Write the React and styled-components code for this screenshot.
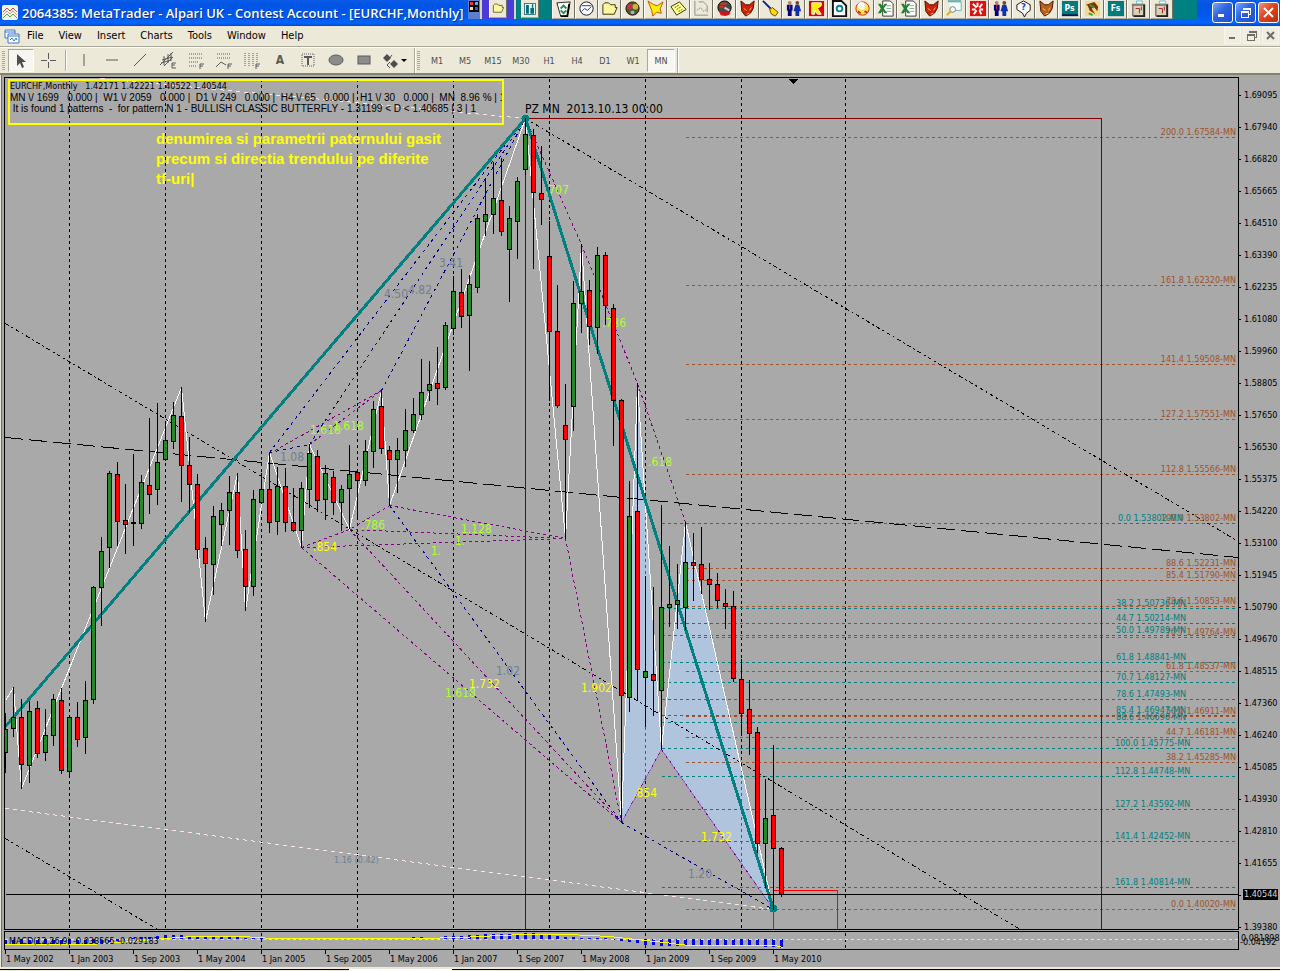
import React from 'react';
import styled, {createGlobalStyle} from 'styled-components'

const UI_FONT = '"DejaVu Sans Condensed", Tahoma, "Noto Sans", sans-serif';

const GlobalStyle = createGlobalStyle`
	body {
		background-color: #ffffff;
		margin: 0;
		padding: 0;
	}

	* {
		box-sizing: border-box;
		font-family: ${UI_FONT};
	}
`;
const Window = styled.div`
	margin-right: 19px;
	background: #ece9d8;
	overflow: hidden;
`;
const TitleBar = styled.header`
	display: flex;
	align-items: flex-start;
	height: 26px;
	background: linear-gradient(#0a5ce8, #0054e3 20%, #0058ee 60%, #0066ff 88%, #0047cc);
	.logo {
		margin: 5px 4px 0 2px;
		flex: none;
	}
`;
const Title = styled.h1`
	flex: none;
	width: 446px;
	margin: 0;
	overflow: hidden;
	white-space: nowrap;
	color: #ffffff;
	font-size: 13px;
	font-weight: 600;
	line-height: 26px;
	font-family: "Open Sans", "Noto Sans", sans-serif;
	text-shadow: 1px 1px 0 #0a2f8c;
`;
const Launcher = styled.nav`
	display: flex;
	flex: none;
	height: 19px;
`;
const Well = styled.div`
	display: flex;
	justify-content: ${props => props.$align || 'center'};
	width: ${props => props.$width};
	padding-left: ${props => props.$pad || '0'};
	background: ${props => props.$color};
	border-right: ${props => props.$edge ? '2px solid #d8d4c8' : 'none'};
`;
const LaunchButton = styled.button`
	display: flex;
	align-items: center;
	justify-content: center;
	width: ${props => props.$small ? '18px' : '23px'};
	height: ${props => props.$small ? '18px' : '19px'};
	padding: 0;
	border: 0;
	border-right: 1px solid #716f64;
	border-left: 1px solid #ffffff;
	border-bottom: 1px solid #aca899;
	background: #ece9d8;
`;
const WindowButtons = styled.div`
	display: flex;
	gap: 2px;
	margin: 2px 1px 0 auto;
`;
const WindowButton = styled.button`
	display: flex;
	align-items: center;
	justify-content: center;
	width: 21px;
	height: 21px;
	padding: 0;
	border: 1px solid #ffffff;
	border-radius: 3px;
	background: ${props => props.$close ? 'linear-gradient(135deg, #f0967a, #e0451c 45%, #b82c08)' : 'linear-gradient(135deg, #7ea6f5, #2c63e0 45%, #1c4fd0)'};
`;
const MenuBar = styled.nav`
	display: flex;
	align-items: center;
	height: 22px;
	padding: 0 1px 2px 4px;
	border-bottom: 1px solid #ffffff;
	box-shadow: inset 0 -1px 0 #aca899;
`;
const MenuItem = styled.button`
	padding: 0 8px 0 7px;
	border: 0;
	background: none;
	color: #000000;
	font-size: 11px;
	line-height: 18px;
`;
const ChildButtons = styled.div`
	display: flex;
	gap: 2px;
	margin-left: auto;
`;
const ChildButton = styled.button`
	display: flex;
	align-items: center;
	justify-content: center;
	width: 17px;
	height: 17px;
	padding: 0;
	border: 1px solid #f6f5ee;
	background: #f0eee2;
`;
const ToolBar = styled.div`
	display: flex;
	align-items: center;
	height: 27px;
	padding-left: 2px;
	border-bottom: 2px solid #85826f;
`;
const Grip = styled.span`
	width: 3px;
	height: 20px;
	margin-right: 3px;
	background: repeating-linear-gradient(#aca899 0 1px, #ece9d8 1px 2px);
`;
const Separator = styled.span`
	width: 2px;
	height: ${props => props.$tall ? '25px' : '21px'};
	margin: ${props => props.$tall ? '0 1px 0 2px' : '0 3px'};
	background: #aca899;
	border-right: 1px solid #ffffff;
`;
const ToolButton = styled.button`
	display: flex;
	align-items: center;
	justify-content: center;
	width: ${props => props.$width || '28px'};
	height: 23px;
	padding: 0;
	border: 1px solid;
	border-color: ${props => props.$pressed ? '#aca899 #ffffff #ffffff #aca899' : 'transparent'};
	background: ${props => props.$pressed ? '#f7f6f0' : 'none'};
	color: #4d4d4d;
	font-size: 9px;
`;
const ChartWindow = styled.main`
	display: grid;
	grid-template-columns: minmax(0, 1fr) 41px;
	row-gap: 1px;
	margin-left: 1px;
	padding: 2px 0 0 2px;
	border-left: 1px solid #716f64;
	background: #a9a9a9;
`;
const Panel = styled.section`
	position: relative;
	border: 1px solid #000000;
	svg {
		display: block;
		width: 100%;
	}
`;
const Caption = styled.div`
	position: absolute;
	top: 1px;
	left: 3px;
	width: 496px;
	height: 46px;
	border: 2px solid #ffff00;
	overflow: hidden;
	white-space: pre;
	font-size: 9px;
	line-height: 11px;
	p {
		margin: 0;
	}
`;
const CaptionLine = styled.p`
	font: 10px/11px "Liberation Sans", Arial, sans-serif;
`;
const Note = styled.p`
	position: absolute;
	top: 51px;
	left: 151px;
	width: 320px;
	margin: 0;
	color: #ffff00;
	font: bold 15px/20px "Liberation Sans", Arial, sans-serif;
`;
const PriceAxis = styled.ol`
	height: 0;
	min-height: 100%;
	margin: 0;
	padding: 2px 0 0;
	list-style: none;
	font-size: 9px;
	line-height: 32px;
	li {
		display: flex;
		align-items: center;
		gap: 3px;
		height: 32px;
	}
	li::before {
		content: "";
		width: 2px;
		height: 1px;
		background: #000000;
	}
`;
const CurrentPrice = styled.b`
	flex: 1;
	margin: 0 2px 2px -1px;
	padding-left: 1px;
	background: #000000;
	color: #d8d8d8;
	font-weight: normal;
	line-height: 11px;
`;
const MacdAxis = styled.div`
	position: relative;
	padding: 3px 0 0 2px;
	font-size: 9px;
	line-height: 9px;
	span + span {
		position: absolute;
		top: 7px;
		left: 1px;
	}
`;
const MacdLabel = styled.span`
	position: absolute;
	top: 4px;
	left: 4px;
	font-size: 9px;
	line-height: 11px;
`;
const TimeAxis = styled.ol`
	display: flex;
	grid-column: 1 / -1;
	height: 17px;
	margin: -1px 0 0;
	padding: 0 0 0 1px;
	list-style: none;
	font-size: 9px;
	line-height: 11px;
	white-space: nowrap;
	li {
		width: 64px;
		height: 3px;
		border-left: 1px solid #000000;
		padding: 4px 0 0;
	}
`;
const StatusEdge = styled.footer`
	display: flex;
	height: 4px;
	padding-top: 2px;
	span {
		flex: 349;
		height: 2px;
		border-top: 1px solid #000000;
	}
	span:nth-child(2) {
		flex: 103;
		border-color: #ffffff;
		background: #ffffff;
	}
	span:nth-child(3) {
		flex: 828;
	}
`;

const months = ['May 2002', 'Jan 2003', 'Sep 2003', 'May 2004', 'Jan 2005', 'Sep 2005', 'May 2006', 'Jan 2007', 'Sep 2007', 'May 2008', 'Jan 2009', 'Sep 2009', 'May 2010'];

const prices = ['1.69095', '1.67940', '1.66820', '1.65665', '1.64510', '1.63390', '1.62235', '1.61080', '1.59960', '1.58805', '1.57650', '1.56530', '1.55375', '1.54220', '1.53100', '1.51945', '1.50790', '1.49670', '1.48515', '1.47360', '1.46240', '1.45085', '1.43930', '1.42810', '1.41655', '1.40544', '1.39380'];

// high, body top, body bottom, low, 1 = up month
const candles = [
	[713, 729, 752, 772, 1], [687, 717, 728, 736, 1], [699, 717, 764, 788, 0], [701, 711, 765, 782, 1],
	[701, 708, 753, 757, 0], [709, 735, 752, 760, 1], [694, 699, 735, 745, 1], [688, 700, 770, 773, 0],
	[715, 717, 771, 776, 1], [702, 717, 739, 746, 0], [681, 700, 737, 753, 1], [586, 587, 699, 703, 1],
	[537, 551, 587, 625, 1], [471, 473, 547, 567, 1], [462, 474, 521, 545, 0], [484, 520, 524, 553, 0],
	[454, 522, 523, 545, 1], [475, 482, 523, 528, 1], [418, 485, 494, 513, 0], [403, 462, 489, 504, 1],
	[424, 440, 459, 460, 1], [402, 415, 441, 448, 1], [387, 416, 465, 501, 0], [437, 465, 484, 512, 0],
	[474, 484, 549, 558, 0], [537, 548, 563, 621, 0], [506, 516, 564, 594, 1], [503, 510, 524, 545, 1],
	[476, 492, 510, 544, 1], [473, 492, 550, 557, 0], [530, 549, 586, 610, 0], [490, 499, 586, 595, 1],
	[473, 489, 502, 503, 1], [452, 489, 522, 532, 0], [467, 486, 521, 534, 1], [468, 486, 522, 531, 0],
	[488, 522, 530, 531, 0], [482, 488, 530, 547, 1], [444, 453, 489, 507, 1], [450, 456, 500, 511, 0],
	[465, 473, 499, 519, 1], [471, 477, 502, 514, 0], [485, 489, 502, 530, 1], [445, 474, 488, 528, 1],
	[470, 472, 480, 518, 0], [440, 451, 480, 485, 1], [401, 409, 451, 467, 1], [390, 406, 448, 453, 0],
	[446, 450, 459, 505, 0], [438, 450, 459, 492, 1], [409, 430, 450, 466, 1], [398, 414, 430, 432, 1],
	[359, 392, 414, 419, 1], [361, 384, 390, 400, 1], [347, 383, 388, 404, 0], [322, 325, 387, 389, 1],
	[276, 291, 328, 334, 1], [269, 292, 316, 327, 0], [275, 284, 315, 370, 1], [214, 218, 287, 292, 1],
	[178, 214, 221, 235, 1], [162, 198, 214, 233, 1], [158, 200, 231, 235, 0], [206, 218, 249, 301, 1],
	[177, 181, 221, 258, 1], [118, 134, 169, 174, 1], [129, 135, 192, 268, 0], [146, 193, 199, 224, 0],
	[221, 256, 331, 400, 0], [285, 331, 405, 407, 0], [384, 425, 439, 538, 0], [281, 303, 406, 430, 1],
	[244, 291, 303, 332, 1], [280, 290, 326, 344, 0], [247, 255, 327, 353, 1], [252, 255, 305, 324, 0],
	[304, 308, 400, 445, 0], [399, 400, 695, 822, 0], [481, 516, 697, 711, 1], [383, 511, 669, 699, 0],
	[576, 671, 677, 726, 1], [587, 674, 680, 715, 0], [505, 607, 690, 749, 1], [546, 604, 607, 626, 1],
	[564, 600, 604, 628, 1], [522, 562, 607, 629, 1], [533, 562, 565, 600, 0], [527, 564, 579, 593, 0],
	[563, 579, 584, 609, 0], [573, 584, 600, 607, 0], [589, 603, 606, 628, 0], [591, 606, 678, 681, 0],
	[659, 679, 713, 734, 0], [680, 709, 733, 754, 0], [727, 732, 843, 852, 0], [779, 818, 843, 887, 1],
	[745, 815, 848, 909, 0], [847, 848, 894, 896, 0],
];

const macd = [
	-6, -6, -6, -6, -6, -6, -6, -6, -6, -6, -5, -4, -4, -3, -2, -1, 1, 2, 2, 3, 4, 4, 4, 3,
	2, 2, 2, 2, 2, 2, 1, 1, 1, 1, 1, 0, 0, 0, 0, 0, 0, 0, 0, 0, 1, 1, 1, 1,
	1, 1, 1, 2, 2, 1, 1, 3, 3, 3, 4, 4, 5, 5, 5, 5, 5, 6, 6, 4, 4, 3, 2, 2,
	1, 1, 1, 1, -1, -2, -3, -4, -6, -6, -7, -7, -7, -6, -6, -6, -6, -6, -6, -6, -6, -6, -7, -8,
	-8, -9,
];

const sienna = [
	[137, '200.0 1.67584'], [285, '161.8 1.62320'], [364, '141.4 1.59508'], [419, '127.2 1.57551'],
	[474, '112.8 1.55566'], [523, '100.0 1.53802'], [568, '88.6 1.52231'], [580, '85.4 1.51790'],
	[606, '78.6 1.50853'], [637, '70.7 1.49764'], [671, '61.8 1.48537'], [716, '50.0 1.46911'],
	[737, '44.7 1.46181'], [762, '38.2 1.45285'], [909, '0.0 1.40020'],
];

const teal = [
	[523, 1118, '0.0 1.53802'], [608, 1116, '38.2 1.50736'], [623, 1116, '44.7 1.50214'], [635, 1116, '50.0 1.49789'],
	[662, 1116, '61.8 1.48841'], [682, 1116, '70.7 1.48127'], [699, 1116, '78.6 1.47493'], [715, 1116, '85.4 1.46947'],
	[722, 1116, '88.6 1.46690'], [748, 1115, '100.0 1.45775'], [776, 1115, '112.8 1.44748'], [809, 1115, '127.2 1.43592'],
	[841, 1115, '141.4 1.42452'], [887, 1115, '161.8 1.40814'],
];

const purpleLines = [
	'269,453 381,390', '309,444 381,390', '301,547 349,529 389,505', '389,505 565,538', '349,529 565,538',
	'301,547 565,538', '301,547 621,822', '349,529 621,822', '565,538 621,822', '525,118 581,244 637,383 685,522',
];
const navyLines = [
	'269,452 525,118', '309,444 525,118', '381,390 525,118', '269,452 309,444', '389,505 621,822', '621,822 773,909',
];
const trendLines = ['525,118 1238,541', '5,323 1020,929', '5,838 157,929'];

const LIME = '#adff2f';
const SLATE = '#708090';
const YELLOW = '#ffff00';
const ratios = [
	[545, 194, '.707', LIME], [602, 327, '.786', LIME], [648, 466, '.618', LIME], [310, 434, '1.618', LIME],
	[333, 430, '1.618', LIME], [361, 529, '.786', LIME], [461, 533, '1.128', LIME], [431, 555, '1.', LIME],
	[455, 545, '1.', LIME], [445, 697, '1.618', LIME], [439, 267, '3.41', SLATE], [408, 294, '4.82', SLATE],
	[384, 298, '4.50', SLATE], [280, 461, '1.08', SLATE], [496, 675, '1.02', SLATE], [688, 878, '1.20', SLATE],
	[313, 551, '.854', YELLOW], [469, 688, '1.732', YELLOW], [581, 692, '1.902', YELLOW], [633, 797, '.854', YELLOW],
	[701, 841, '1.732', YELLOW],
];

const grid = [69, 165, 261, 357, 453, 549, 845];

const PriceChart = () => (
	<svg height="851" role="img" aria-label="EURCHF monthly candles">
		<g transform="translate(-4.5 -77.5)" fill="none" shapeRendering="crispEdges">
			<g fill="#b0c4de">
				<path d="M621 822 637 383 661 749Z" />
				<path d="M661 749 685 522 773 909Z" />
			</g>
			<g stroke="#000000" strokeDasharray="3 3">
				{grid.map(x => <path key={x} d={`M${x} 78V929`} />)}
				<path d="M645 78V498M645 780V929M741 78V768M741 864V929" />
			</g>
			<path d="M645 498V780M741 768V864" stroke="#008080" strokeDasharray="3 3" />
			<g stroke="#a0522d" strokeDasharray="3 3">
				{sienna.map(([y]) => <path key={y} d={`M685 ${y}H1235`} />)}
			</g>
			<g stroke="#008080" strokeDasharray="3 3">
				{teal.map(([y]) => <path key={y} d={`M661 ${y}H1235`} />)}
			</g>
			<path d="M5 437 1238 557" stroke="#000000" strokeDasharray="18 6" />
			<g stroke="#000000" strokeDasharray="4 3 2 3">
				{trendLines.map(p => <polyline key={p} points={p} />)}
			</g>
			<path d="M5 808 773 909M100 78 525 118" stroke="#ffe4e1" strokeDasharray="4 4" />
			<path d="M525 929V118H1101V929" stroke="#800000" />
			<path d="M773 929V890H837V929" stroke="#ff0000" />
			<g stroke="#800080" strokeDasharray="3 3">
				{purpleLines.map(p => <polyline key={p} points={p} />)}
			</g>
			<g stroke="#00008b" strokeDasharray="3 4">
				{navyLines.map(p => <polyline key={p} points={p} />)}
			</g>
			<path d="M621 822 661 749 773 909" stroke="#9370db" />
			<path d="M621 822 661 749 773 909" stroke="#800080" strokeDasharray="2 5" />
			<path d="M5 700 13 687 21 788 181 387 205 621 237 473 245 610 269 452 301 547 309 444 349 529 381 390 389 505 525 118 565 538 581 244 621 822 637 383 661 749 685 522 773 909" stroke="#ffffff" />
			<path d="M5 726 525 118 773 909" stroke="#008080" strokeWidth="3" />
			<g fill="#008080">
				<circle cx="525" cy="118" r="4" />
				<circle cx="773" cy="908" r="4" />
			</g>
			<path d="M5 894H1238" stroke="#000000" />
			<path d="M787 78h11l-5 5h-1z" fill="#000000" />
		</g>
		<g transform="translate(-5 -78)">
			<g fontSize="9" fill="#a0522d" textAnchor="end">
				{sienna.map(([y, text]) => <text key={y} x="1236" y={y - 2}>{text}-MN</text>)}
			</g>
			<g fontSize="9" fill="#008080">
				{teal.map(([y, x, text]) => <text key={y} x={x} y={y - 2}>{text}-MN</text>)}
			</g>
			<g fontSize="12">
				{ratios.map(([x, y, text, color]) => <text key={x} x={x} y={y} fill={color}>{text}</text>)}
				<text x="525" y="113" xmlSpace="preserve">PZ MN  2013.10.13 00:00</text>
			</g>
			<text x="334" y="863" fontSize="9" fill={SLATE}>1.16 (0.42)</text>
			{candles.map(([high, top, bottom, low, up], i) => {
				const x = 5 + i * 8;
				return (
					<g key={x} shapeRendering="crispEdges">
						<rect x={x} y={high} width="1" height={low - high + 1} />
						<rect x={x - 2} y={top} width="5" height={bottom - top + 1} />
						<rect x={x - 1} y={top + 1} width="3" height={Math.max(bottom - top - 1, 0)} fill={up ? '#228b22' : '#ff0000'} />
					</g>
				);
			})}
		</g>
	</svg>
);

const MacdChart = () => (
	<svg height="17" role="img" aria-label="MACD">
		<g transform="translate(-5 -932)" shapeRendering="crispEdges">
			{macd.map((v, i) => (
				<rect key={i} x={4 + i * 8} y={v > 0 ? 939 - v : 939} width="3" height={Math.abs(v)} fill="#0000ff" />
			))}
			<g fill="none" transform="translate(0 .5)">
				<path d="M845 932V949M69 932V949M261 932V949M453 932V949M645 932V949" stroke="#000000" strokeDasharray="3 3" />
				<path d="M5 939H1238" stroke="#ffff00" strokeDasharray="3 3" />
				<path d="M5 944H90L120 942 165 938 193 936H242L272 938H420L460 937 500 935 525 934H568L610 936 645 940 665 942 680 944 690 945H775L783 947" stroke="#ffff00" />
			</g>
		</g>
	</svg>
);

const Fox = ({color = '#d02010'}) => (
	<>
		<path d="M2 1l5 4h4l5-4-1 8-3 5-5 3-4-5z" fill={color} stroke="#4a1000" />
		<path d="M5 9l3 2m5-3-2 3m-3 4 3-1" stroke="#ffcc33" fill="none" />
	</>
);
const People = () => (
	<>
		<circle cx="5" cy="3" r="2" fill="#c08060" />
		<path d="M2 5h6v6H7v6H3v-6H2z" fill="#000080" />
		<circle cx="13" cy="3" r="2" fill="#804020" />
		<path d="M11 5h4l2 7h-2v5h-4v-5H9z" fill="#1030b0" />
		<path d="M5 5v5" stroke="#ff3030" />
	</>
);
const Excel = () => (
	<>
		<path d="M6 1h8l3 3v13H6z" fill="#ffffff" stroke="#333333" />
		<path d="M10 6h5M10 9h5M10 12h5" stroke="#80b080" />
		<path d="M1 4h3l2 3 2-3h3l-4 5 4 5H8l-2-3-2 3H1l3-5z" fill="#208030" />
	</>
);
const Bin = () => (
	<>
		<path d="M3 5h12v12H3z" fill="#d8d0b8" stroke="#444444" />
		<path d="M2 4h14v2H2z" fill="#80786a" />
		<path d="M7 1h6v3H7z" fill="#ffffff" stroke="#5fc0d0" />
		<path d="M6 9h4v5M12 7v4" stroke="#b02020" fill="none" />
		<path d="M15 5v12H4" stroke="#222222" strokeWidth="2" fill="none" />
	</>
);
const Folder = () => <path d="M2 15V5l2-2h4l2 2h5v3h2l-3 7z" fill="#fff7a0" stroke="#333300" />;
const Tile = ({text, ring}) => (
	<>
		<rect x="1" y="1" width="17" height="16" fill="#007c80" />
		<path d="M1 15h17v2H1z" fill={ring || '#007c80'} />
		<text x="9" y="12" fontSize="9" fontWeight="bold" textAnchor="middle" fill="#ffffff">{text}</text>
	</>
);

const launchers = [
	['Recycle Bin', <><path d="M2 3l14-1-3 15H6z" fill="#ffffff" stroke="#222222" /><path d="M6 9l3-3 3 3M12 11l-3 3-3-3" stroke="#209040" strokeWidth="2" fill="none" /><path d="M15 4l-2 13H6" stroke="#000000" strokeWidth="2" fill="none" /></>],
	['Charts', <><circle cx="9" cy="9" r="7" fill="#ffffff" stroke="#111133" /><path d="M4 6h10M4 12l3-3 3 2 4-4" stroke="#1030a0" fill="none" /></>],
	['Documents', <Folder />],
	['Player', <><circle cx="9" cy="9" r="7" fill="#406020" stroke="#301010" /><circle cx="6" cy="7" r="3" fill="#c03050" /><circle cx="12" cy="7" r="3" fill="#d0b040" /><circle cx="9" cy="13" r="2" fill="#c0a0d0" /></>],
	['Star', <path d="M1 1l6 4 4 1 6-4-3 7 1 5-5-1-4 4-1-6z" fill="#ffee00" stroke="#c05000" />],
	['Notes', <><path d="M1 7l9-5 7 8-10 6z" fill="#ffff90" stroke="#333300" /><path d="M5 8l5-3M7 10l5-3M9 12l4-2" stroke="#555500" strokeDasharray="2 1" /></>],
	['Sketch', <><path d="M2 1v15h14M6 2h5l4 4v7" stroke="#8c8c84" fill="none" /><path d="M4 11l4-3 3 4 3-2" stroke="#50a0b0" strokeDasharray="2 1" fill="none" /></>],
	['Helmet', <><circle cx="9" cy="8" r="7" fill="#504848" stroke="#000000" /><path d="M3 11l3 2h9v2l-5 2-5-1z" fill="#e01010" /><path d="M5 4h6M4 7h4" stroke="#e03020" strokeWidth="2" /><path d="M9 8l5 3" stroke="#d0d0d0" strokeWidth="2" /></>],
	['Fox', <Fox />],
	['Screwdriver', <><path d="M1 1l8 8" stroke="#1020a0" strokeWidth="2" /><path d="M8 10l3-2 6 5-3 4-4-2z" fill="#ffdd00" stroke="#704000" /></>],
	['Accounts', <People />],
	['Karaoke', <><rect x="1" y="1" width="16" height="16" fill="#e00000" /><path d="M4 3h10v3l-4 3 4 6h-4L7 11v4H4z" fill="#ffee00" stroke="#ffffff" /></>],
	['Viewer', <><path d="M2 1h9l5 5v11H2z" fill="#ffffff" stroke="#111111" strokeWidth="2" /><circle cx="9" cy="9" r="3" fill="none" stroke="#008090" strokeWidth="2" /></>],
	['Ball', <><circle cx="9" cy="9" r="7" fill="#ffe840" stroke="#d02020" /><circle cx="8" cy="6" r="4" fill="#ffffff" /><path d="M4 12l3 2m4-2 3 1" stroke="#e02020" strokeWidth="2" /></>],
	['Workbook', <Excel />],
	['Workbook copy', <Excel />],
	['Fox two', <Fox />],
	['Search', <><path d="M2 2h14v9H7" fill="#f4ffff" stroke="#70b0b0" /><path d="M2 1h14" stroke="#209090" /><circle cx="7" cy="10" r="3" fill="#ffffff" stroke="#777777" /><path d="M5 12l-4 4" stroke="#d0b000" strokeWidth="2" /></>],
	['Burst', <><rect x="1" y="1" width="17" height="16" fill="#e01010" /><path d="M9 3v4M4 4l4 4M14 4l-3 4M3 10h4M15 10h-4M5 15l3-4M13 15l-2-4" stroke="#ffffff" strokeWidth="2" /></>],
	['Accounts two', <People />],
	['Help', <><path d="M9 1l7 4v6l-4 3-2 4-2-4-6-4V5z" fill="#ffffff" stroke="#111111" /><text x="9" y="11" fontSize="10" fontWeight="bold" textAnchor="middle" fill="#2040d0">?</text></>],
	['Fox three', <Fox color="#b8601c" />],
	['Photo editor', <Tile text="Ps" ring="#002050" />],
	['Bird', <><rect x="1" y="1" width="16" height="16" fill="#f0dc90" /><path d="M2 5l9-3 4 5-1 5-3-4-3 1 4 6-6-4-2-5z" fill="#803010" /><path d="M6 5l5 3M5 14l4 2" stroke="#30a040" strokeWidth="2" /></>],
	['Font studio', <Tile text="Fs" />],
	['Bin', <Bin />],
	['Bin two', <Bin />],
];

const tools = [
	['Vertical line', <path d="M9 3v12" />],
	['Horizontal line', <path d="M3 9h12" />],
	['Trendline', <path d="M3 15L15 3" />],
	['Channel', <><path d="M1 14L14 1M3 9l10-3M2 12l10-3M5 14V5M9 12V3M12 10V2M5 15l9-9" /><path d="M17 12h-4v5h4M13 14h3" /></>],
	['Fibonacci', <><path d="M2 3h14M2 7h14M2 11h9M2 15h8" strokeDasharray="1 1" /><path d="M13 18v-5h4M13 15h3" /></>],
	['Fibonacci fan', <><path d="M2 3h14M2 7h14" strokeDasharray="1 1" /><path d="M1 16l5-5 5 3M13 18v-5h4M13 15h3" /></>],
	['Time zones', <><path d="M2 2v14M6 2v14M10 2v14M14 2v9" strokeDasharray="1 1" /><path d="M13 18v-5h4M13 15h3" /></>],
	['Text', <text x="9" y="13" fontSize="12" fontWeight="bold" textAnchor="middle" stroke="none" fill="#5a5a5a">A</text>],
	['Label', <><rect x="3" y="3" width="12" height="12" strokeDasharray="1 1" /><path d="M5 6h8M9 6v8" strokeWidth="2" /></>],
	['Ellipse', <ellipse cx="9" cy="9" rx="7" ry="5" fill="#8c8c8c" />],
	['Rectangle', <rect x="3" y="5" width="12" height="8" fill="#8c8c8c" />],
];

const Icon = ({children, size = 18}) => (
	<svg width={size} height={size} viewBox="0 0 19 19" fill="none" aria-hidden="true">{children}</svg>
);

const Restore = ({color}) => (
	<svg width="11" height="11" viewBox="0 0 11 11" fill="none" stroke={color} aria-hidden="true" shapeRendering="crispEdges">
		<path d="M3 3V1h7v6H8M3 2h7M1 4h7v6H1zM1 5h7" />
	</svg>
);

function App() {
	return (
		<>
			<GlobalStyle />
			<Window>
				<TitleBar>
					<svg className="logo" width="16" height="15" viewBox="0 0 16 15" fill="none" aria-hidden="true">
						<rect width="16" height="15" rx="2" fill="#f4f4ec" />
						<path d="M1 7l4-4 3 3 3-3 4 4" stroke="#e05030" />
						<path d="M1 10l4-4 3 3 3-3 4 4" stroke="#e8a070" />
						<path d="M1 13l4-4 3 3 3-3 4 4" stroke="#50a850" />
					</svg>
					<Title>2064385: MetaTrader - Alpari UK - Contest Account - [EURCHF,Monthly]</Title>
					<Launcher aria-label="Shortcuts">
						<Well $width="14px" $color="#5b7fd0" $edge>
							<svg width="10" height="12" aria-hidden="true">
								<rect width="10" height="11" y="1" fill="#000000" />
								<path d="M1 2h3v3H1z" fill="#ff3030" /><path d="M6 2h3v3H6z" fill="#30c0ff" />
								<path d="M1 7h3v3H1z" fill="#ffe060" /><path d="M6 7h3v3H6z" fill="#3050ff" />
							</svg>
						</Well>
						<Well $width="34px" $color="#4a3cd6" $edge>
							<LaunchButton $small aria-label="Folder"><Icon size={13}><Folder /></Icon></LaunchButton>
						</Well>
						<Well $width="36px" $color="#008080" $align="flex-start" $pad="5px">
							<LaunchButton $small aria-label="Terminal">
								<Icon size={14}><rect x="2" y="2" width="15" height="15" fill="#e8ffff" stroke="#105060" /><path d="M4 4h4v12H4zM10 8h5v8h-5z" fill="#007080" /><path d="M13 3v5" stroke="#007080" strokeWidth="2" /></Icon>
							</LaunchButton>
						</Well>
						{launchers.map(([name, art]) => (
							<LaunchButton key={name} aria-label={name}><Icon>{art}</Icon></LaunchButton>
						))}
						<Well $width="24px" $color="#008080" />
					</Launcher>
					<WindowButtons>
						<WindowButton aria-label="Minimize"><svg width="11" height="11"><path d="M1 7h6v3H1z" fill="#ffffff" /></svg></WindowButton>
						<WindowButton aria-label="Restore"><Restore color="#ffffff" /></WindowButton>
						<WindowButton $close aria-label="Close"><svg width="13" height="13"><path d="M2 2l9 9M11 2l-9 9" stroke="#ffffff" strokeWidth="2" /></svg></WindowButton>
					</WindowButtons>
				</TitleBar>
				<MenuBar>
					<svg width="16" height="16" viewBox="0 0 16 16" fill="#ffffff" stroke="#3c78d0" aria-hidden="true">
						<path d="M1 2h10v8H1zM1 4h10" />
						<path d="M4 6h11v9H4zM4 8h11M6 12l2-2 2 3 2-3 1 2" />
					</svg>
					{['File', 'View', 'Insert', 'Charts', 'Tools', 'Window', 'Help'].map(name => <MenuItem key={name}>{name}</MenuItem>)}
					<ChildButtons>
						<ChildButton aria-label="Minimize chart"><svg width="9" height="9"><path d="M1 6h6v2H1z" fill="#716f64" /></svg></ChildButton>
						<ChildButton aria-label="Restore chart"><Restore color="#716f64" /></ChildButton>
						<ChildButton aria-label="Close chart"><svg width="9" height="9"><path d="M1 1l7 7M8 1L1 8" stroke="#716f64" strokeWidth="2" /></svg></ChildButton>
					</ChildButtons>
				</MenuBar>
				<ToolBar role="toolbar">
					<Grip />
					<ToolButton $width="26px" $pressed aria-label="Cursor"><svg width="12" height="16"><path d="M2 1v12l3-3 2 5 2-1-2-5h4z" fill="#4d4d4d" /></svg></ToolButton>
					<ToolButton aria-label="Crosshair"><svg width="17" height="17" shapeRendering="crispEdges"><path d="M8 1h1v6H8zM8 10h1v6H8zM1 8h6v1H1zM10 8h6v1h-6z" fill="#5a5a5a" /></svg></ToolButton>
					<Separator />
					{tools.map(([name, art]) => (
						<ToolButton key={name} aria-label={name}>
							<svg width="19" height="19" fill="none" stroke="#5a5a5a" aria-hidden="true">{art}</svg>
						</ToolButton>
					))}
					<ToolButton $width="34px" aria-label="Arrows">
						<svg width="26" height="16" fill="#4d4d4d">
							<path d="M5 1l4 4-4 4-4-4zM12 7l4 4-4 4-4-4z" />
							<path d="M10 2l-4 5M8 9l-3 3 3 3" stroke="#4d4d4d" fill="none" />
							<path d="M19 6h6l-3 3z" fill="#000000" />
						</svg>
					</ToolButton>
					<Separator $tall />
					<Grip />
					{['M1', 'M5', 'M15', 'M30', 'H1', 'H4', 'D1', 'W1', 'MN'].map(name => (
						<ToolButton key={name} $pressed={name === 'MN'}>{name}</ToolButton>
					))}
					<Separator $tall />
				</ToolBar>
				<ChartWindow>
					<Panel>
						<PriceChart />
						<Caption>
							<p>EURCHF,Monthly   1.42171 1.42221 1.40522 1.40544</p>
							<CaptionLine>{'MN \\/ 1699   0.000 |  W1 \\/ 2059   0.000 |  D1 \\/ 249   0.000 |  H4 \\/ 65   0.000 |  H1 \\/ 30   0.000 |  MN  8.96 % | 11'}</CaptionLine>
							<CaptionLine> It is found 1 patterns  -  for pattern N 1 - BULLISH CLASSIC BUTTERFLY - 1.31199 &lt; D &lt; 1.40685 | 3 | 1</CaptionLine>
						</Caption>
						<Note>denumirea si parametrii paternului gasit precum si directia trendului pe diferite<br />tf-uri|</Note>
					</Panel>
					<PriceAxis>
						{prices.map(price => (
							<li key={price}>{price === '1.40544' ? <CurrentPrice>{price}</CurrentPrice> : price}</li>
						))}
					</PriceAxis>
					<Panel>
						<MacdChart />
						<MacdLabel>MACD(12,26,9) -0.038565 -0.029183</MacdLabel>
					</Panel>
					<MacdAxis><span>0.081898</span><span>-0.04192</span></MacdAxis>
					<TimeAxis>
						{months.map(month => <li key={month}>1 {month}</li>)}
					</TimeAxis>
				</ChartWindow>
				<StatusEdge><span /><span /><span /></StatusEdge>
			</Window>
		</>
	);
}

export default App;
